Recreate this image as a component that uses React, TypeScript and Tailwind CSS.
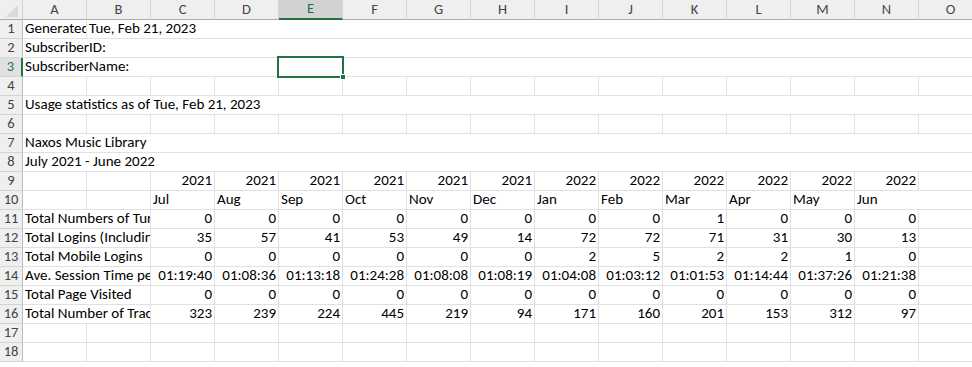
import React from 'react';

const COLS = ['A', 'B', 'C', 'D', 'E', 'F', 'G', 'H', 'I', 'J', 'K', 'L', 'M', 'N', 'O'];

type Val = string | number | null;

const months = ['Jul', 'Aug', 'Sep', 'Oct', 'Nov', 'Dec', 'Jan', 'Feb', 'Mar', 'Apr', 'May', 'Jun'];
const years = [2021, 2021, 2021, 2021, 2021, 2021, 2022, 2022, 2022, 2022, 2022, 2022];

const stats: { label: string; values: Val[] }[] = [
    { label: 'Total Numbers of Turnaways', values: [0, 0, 0, 0, 0, 0, 0, 0, 1, 0, 0, 0] },
    { label: 'Total Logins (Including Mobile Logins)', values: [35, 57, 41, 53, 49, 14, 72, 72, 71, 31, 30, 13] },
    { label: 'Total Mobile Logins', values: [0, 0, 0, 0, 0, 0, 2, 5, 2, 2, 1, 0] },
    {
        label: 'Ave. Session Time per Login',
        values: ['01:19:40', '01:08:36', '01:13:18', '01:24:28', '01:08:08', '01:08:19', '01:04:08', '01:03:12', '01:01:53', '01:14:44', '01:37:26', '01:21:38'],
    },
    { label: 'Total Page Visited', values: [0, 0, 0, 0, 0, 0, 0, 0, 0, 0, 0, 0] },
    { label: 'Total Number of Tracks Played', values: [323, 239, 224, 445, 219, 94, 171, 160, 201, 153, 312, 97] },
];

const pad = (vals: Val[]): Val[] => {
    const out = [...vals];
    while (out.length < COLS.length) out.push(null);
    return out;
};

// numbers & times are right aligned, plain text left aligned (Excel default)
const rows: Val[][] = [
    pad(['Generated:', 'Tue, Feb 21, 2023']),
    pad(['SubscriberID:']),
    pad(['SubscriberName:']),
    pad([]),
    pad(['Usage statistics as of Tue, Feb 21, 2023']),
    pad([]),
    pad(['Naxos Music Library']),
    pad(['July 2021 - June 2022']),
    pad([null, null, ...years]),
    pad([null, null, ...months]),
    ...stats.map((s) => pad([s.label, null, ...s.values])),
    pad([]),
    pad([]),
];

const isRight = (v: Val) => typeof v === 'number' || (typeof v === 'string' && /^\d\d:\d\d:\d\d$/.test(v));

function SheetRow({ index, values }: { index: number; values: Val[] }) {
    const cells: React.ReactNode[] = [];
    let c = 0;
    while (c < values.length) {
        const v = values[c];
        let span = 1;
        if (v !== null && !isRight(v)) {
            while (c + span < values.length && values[c + span] === null) span++;
        }
        const right = isRight(v);
        cells.push(
            <div
                key={c}
                style={{ gridColumn: `span ${span} / span ${span}` }}
                className={`h-[19px] border-r border-b border-[#e1e1e1] overflow-hidden whitespace-nowrap flex items-end pb-[1px] ${right ? 'justify-end pr-[2px]' : 'justify-start pl-[2px]'}`}
            >
                {v !== null && <span className="leading-[17px]">{v}</span>}
            </div>
        );
        c += span;
    }
    const selected = index === 3;
    return (
        <>
            <div
                className={`h-[19px] flex items-center justify-center border-b border-[#d4d4d4] text-[14.5px] ${selected ? 'bg-[#e1e1e1] text-[#217346] border-r-2 border-r-[#217346]' : 'bg-[#efefef] text-[#444] border-r border-r-[#bcbcbc]'}`}
            >
                {index}
            </div>
            {cells}
        </>
    );
}

export default function App() {
    return (
        <div
            className="relative w-[972px] h-[367px] overflow-hidden bg-white text-[15px] text-black"
            style={{ fontFamily: 'Calibri, Carlito, Lato, "Liberation Sans", sans-serif' }}
        >
            <div className="grid grid-cols-[23px_repeat(15,64px)] w-max">
                {/* corner */}
                <div className="h-[20px] bg-[#efefef] border-r border-b border-r-[#d4d4d4] border-b-[#ababab] flex items-start justify-start">
                    <svg width="22" height="19" viewBox="0 0 22 19">
                        <polygon points="6,17 18,17 18,5" fill="#d9d9d9" />
                    </svg>
                </div>
                {COLS.map((col) => (
                    <div
                        key={col}
                        className={`h-[20px] flex items-center justify-center text-[14.5px] border-r border-r-[#d4d4d4] ${col === 'E' ? 'bg-[#d2d2d2] text-[#217346] border-b-2 border-b-[#217346]' : 'bg-[#efefef] text-[#444] border-b border-b-[#ababab]'}`}
                    >
                        {col}
                    </div>
                ))}
                {rows.map((r, i) => (
                    <SheetRow key={i} index={i + 1} values={r} />
                ))}
            </div>

            {/* active cell E3 */}
            <div className="absolute left-[277px] top-[56px] w-[67px] h-[22px] border-2 border-[#217346] pointer-events-none" />
            <div className="absolute left-[340px] top-[74px] w-[6px] h-[6px] bg-[#217346] border border-white pointer-events-none" />
        </div>
    );
}
